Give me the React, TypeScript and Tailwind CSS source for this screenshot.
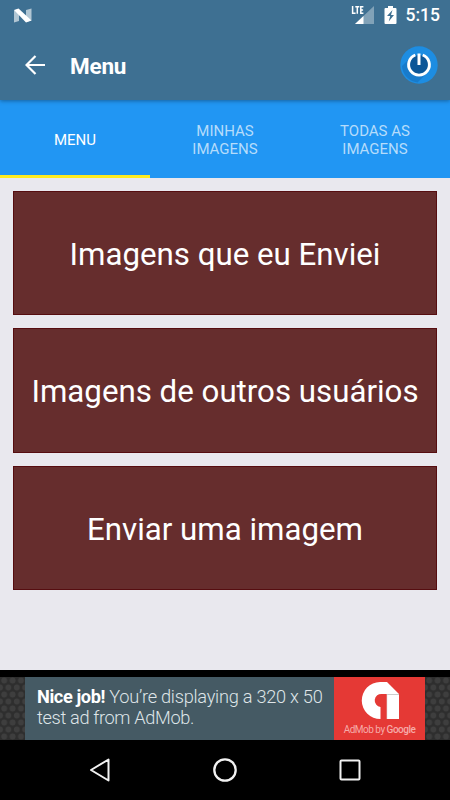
import type {ReactNode} from "react";

const TABS = ["Menu", "Minhas imagens", "Todas as imagens"];

const ACTIONS = [
    "Imagens que eu Enviei",
    "Imagens de outros usuários",
    "Enviar uma imagem",
];

const StatusBar = () => (
    <div className="flex h-[30px] items-center pl-[13px] pr-[10px]">
        <svg className="h-[15px] w-[20px]" viewBox="0 0 20 15" fill="#fff">
            <path d="M1 2.500 6 1v12l-5 1.500z" opacity=".6"/>
            <path d="M18.500 .5v12L13 14V2z" opacity=".6"/>
            <path d="M1 2 5.500 .5 18.500 12.500 13 14.500z"/>
        </svg>
        <div className="ml-auto flex items-center">
            <svg className="h-[20px] w-[24px]" viewBox="0 0 24 20">
                <path d="M23 1v18H4z" fill="#fff" opacity=".35"/>
                <path d="M12.500 11v8H4z" fill="#fff"/>
                <path d="M1.600 1v7.200h3M4.300 1.800h4M6.300 1.800v7M12.400 1.800h-2.600v6.400h2.600M9.800 5h2.300" fill="none" stroke="#fff" strokeWidth="1.500"/>
            </svg>
            <svg className="ml-[9px] h-[18px] w-[13px]" viewBox="0 0 13 18">
                <path d="M4 0h5v2h2.500q1 0 1 1v14q0 1-1 1h-10q-1 0-1-1V3q0-1 1-1H4z" fill="#fff"/>
                <path d="M8.500 4 3 10h3.200l-1.500 5.500L10 9H7z" fill="#3e7092"/>
            </svg>
            <span className="ml-[9px] pt-[2px] text-[17.500px] leading-none font-medium text-white">5:15</span>
        </div>
    </div>
);

const Toolbar = () => (
    <div className="flex h-[70px] items-center pl-[25px] pr-[12px]">
        <svg className="h-5 w-5" viewBox="0 0 20 20" fill="none" stroke="#fff" strokeWidth="2.200">
            <path d="M20 10H2M10.500 1 1.500 10l9 9"/>
        </svg>
        <h1 className="ml-[25px] pt-[3px] text-[22.500px] leading-none font-bold tracking-[-0.2px] text-white">Menu</h1>
        <svg className="ml-auto h-[38px] w-[38px]" viewBox="0 0 38 38">
            <circle cx="19" cy="19" r="18.700" fill="#1d8de2"/>
            <path d="M11 11 2 20a17.500 17.500 0 0 0 15.500 16.500l10-10z" fill="#187bcb"/>
            <circle cx="19" cy="19" r="10" fill="#0c5697"/>
            <path d="M15.300 9a10.400 10.400 0 1 0 7.400 0" fill="none" stroke="#fff" strokeWidth="2.900"/>
            <path d="M19 7.500V19" stroke="#fff" strokeWidth="3"/>
        </svg>
    </div>
);

const Tab = ({active, children}: {active: boolean; children: ReactNode}) => (
    <button
        className={`flex flex-1 items-center justify-center border-b-[3px] px-8 pt-[6px] text-[15px] leading-[17.500px] uppercase ${
            active ? "border-[#ffeb1f] text-white" : "border-[#2196f3] text-[#b5dcfb]"
        }`}
    >
        {children}
    </button>
);

// Woven dark background seen on both sides of the banner
const Mesh = () => (
    <svg className="h-[63px] w-[25px]">
        <defs>
            <pattern id="mesh" width="8.400" height="14" patternUnits="userSpaceOnUse">
                <rect width="8.400" height="14" fill="#2e2e2e"/>
                <circle cx="4.200" cy="3.500" r="2.900" fill="#3e3e3e"/>
                <circle cx="0" cy="10.500" r="2.900" fill="#3e3e3e"/>
                <circle cx="8.400" cy="10.500" r="2.900" fill="#3e3e3e"/>
            </pattern>
        </defs>
        <rect width="25" height="63" fill="url(#mesh)"/>
    </svg>
);

const AdBanner = () => (
    <div className="flex h-[70px] bg-black pt-[7px]">
        <Mesh/>
        <div className="w-[309px] bg-[#455a64] pt-[9px] pl-[12px] text-[18.200px] leading-[21px] font-light tracking-[-0.25px] whitespace-nowrap text-[#dfe5e8]">
            <p><b className="font-bold tracking-[-0.4px] text-white">Nice job!</b> You’re displaying a 320 x 50</p>
            <p className="tracking-[-0.35px]">test ad from AdMob.</p>
        </div>
        <div className="flex w-[91px] flex-col items-center bg-[#e53935] pt-[4px]">
            <svg className="h-[39px] w-[40px]" viewBox="0 0 40 39">
                <path d="M20 1h7l12 12H22a6.500 6.500 0 0 0-1.500 13V38A18.500 18.500 0 0 1 20 1z" fill="#fff"/>
                <path d="M27 13h12v25H27z" fill="#fff"/>
                <path d="M27 13.500h12" stroke="#ccc"/>
                <path d="M27 13v25" stroke="#ddd" strokeWidth=".6"/>
            </svg>
            <p className="mt-[3px] text-[10px] leading-[13px] tracking-[-0.5px] whitespace-nowrap text-[#f6aaa8]">
                AdMob by <span className="font-medium">Google</span>
            </p>
        </div>
        <Mesh/>
    </div>
);

const NavBar = () => (
    <div className="flex h-[60px] items-center justify-between bg-black px-[88px]">
        <svg className="h-6 w-6" viewBox="0 0 24 24" fill="none" stroke="#f2f2f2" strokeWidth="2">
            <path d="M20.500 1.500v21L3 12z" strokeLinejoin="round"/>
        </svg>
        <svg className="h-6 w-6" viewBox="0 0 24 24" fill="none" stroke="#f2f2f2" strokeWidth="2.300">
            <circle cx="12" cy="12" r="10.700"/>
        </svg>
        <svg className="h-6 w-6" viewBox="0 0 24 24" fill="none" stroke="#f2f2f2" strokeWidth="2">
            <rect x="2.500" y="2.500" width="19" height="19" rx="1"/>
        </svg>
    </div>
);

export default function App() {
    return (
        <div className="flex h-[800px] w-[450px] flex-col overflow-hidden bg-[#e9e8ee] font-['Roboto',sans-serif]">
            <header className="relative bg-[#3e7092] shadow-[0_1px_4px_rgba(0,0,0,0.35)]">
                <StatusBar/>
                <Toolbar/>
            </header>
            <nav className="flex h-[78px] bg-[#2196f3]">
                {TABS.map((tab, i) => (
                    <Tab key={tab} active={i === 0}>{tab}</Tab>
                ))}
            </nav>
            <main className="flex flex-1 flex-col gap-[13px] px-[13px] pt-[12.800px]">
                {ACTIONS.map((action) => (
                    <button
                        key={action}
                        className="h-[124.400px] border border-[#560d10] bg-[#662d2d] pt-[3px] text-[31.250px] leading-none whitespace-nowrap text-white"
                    >
                        {action}
                    </button>
                ))}
            </main>
            <AdBanner/>
            <NavBar/>
        </div>
    );
}
